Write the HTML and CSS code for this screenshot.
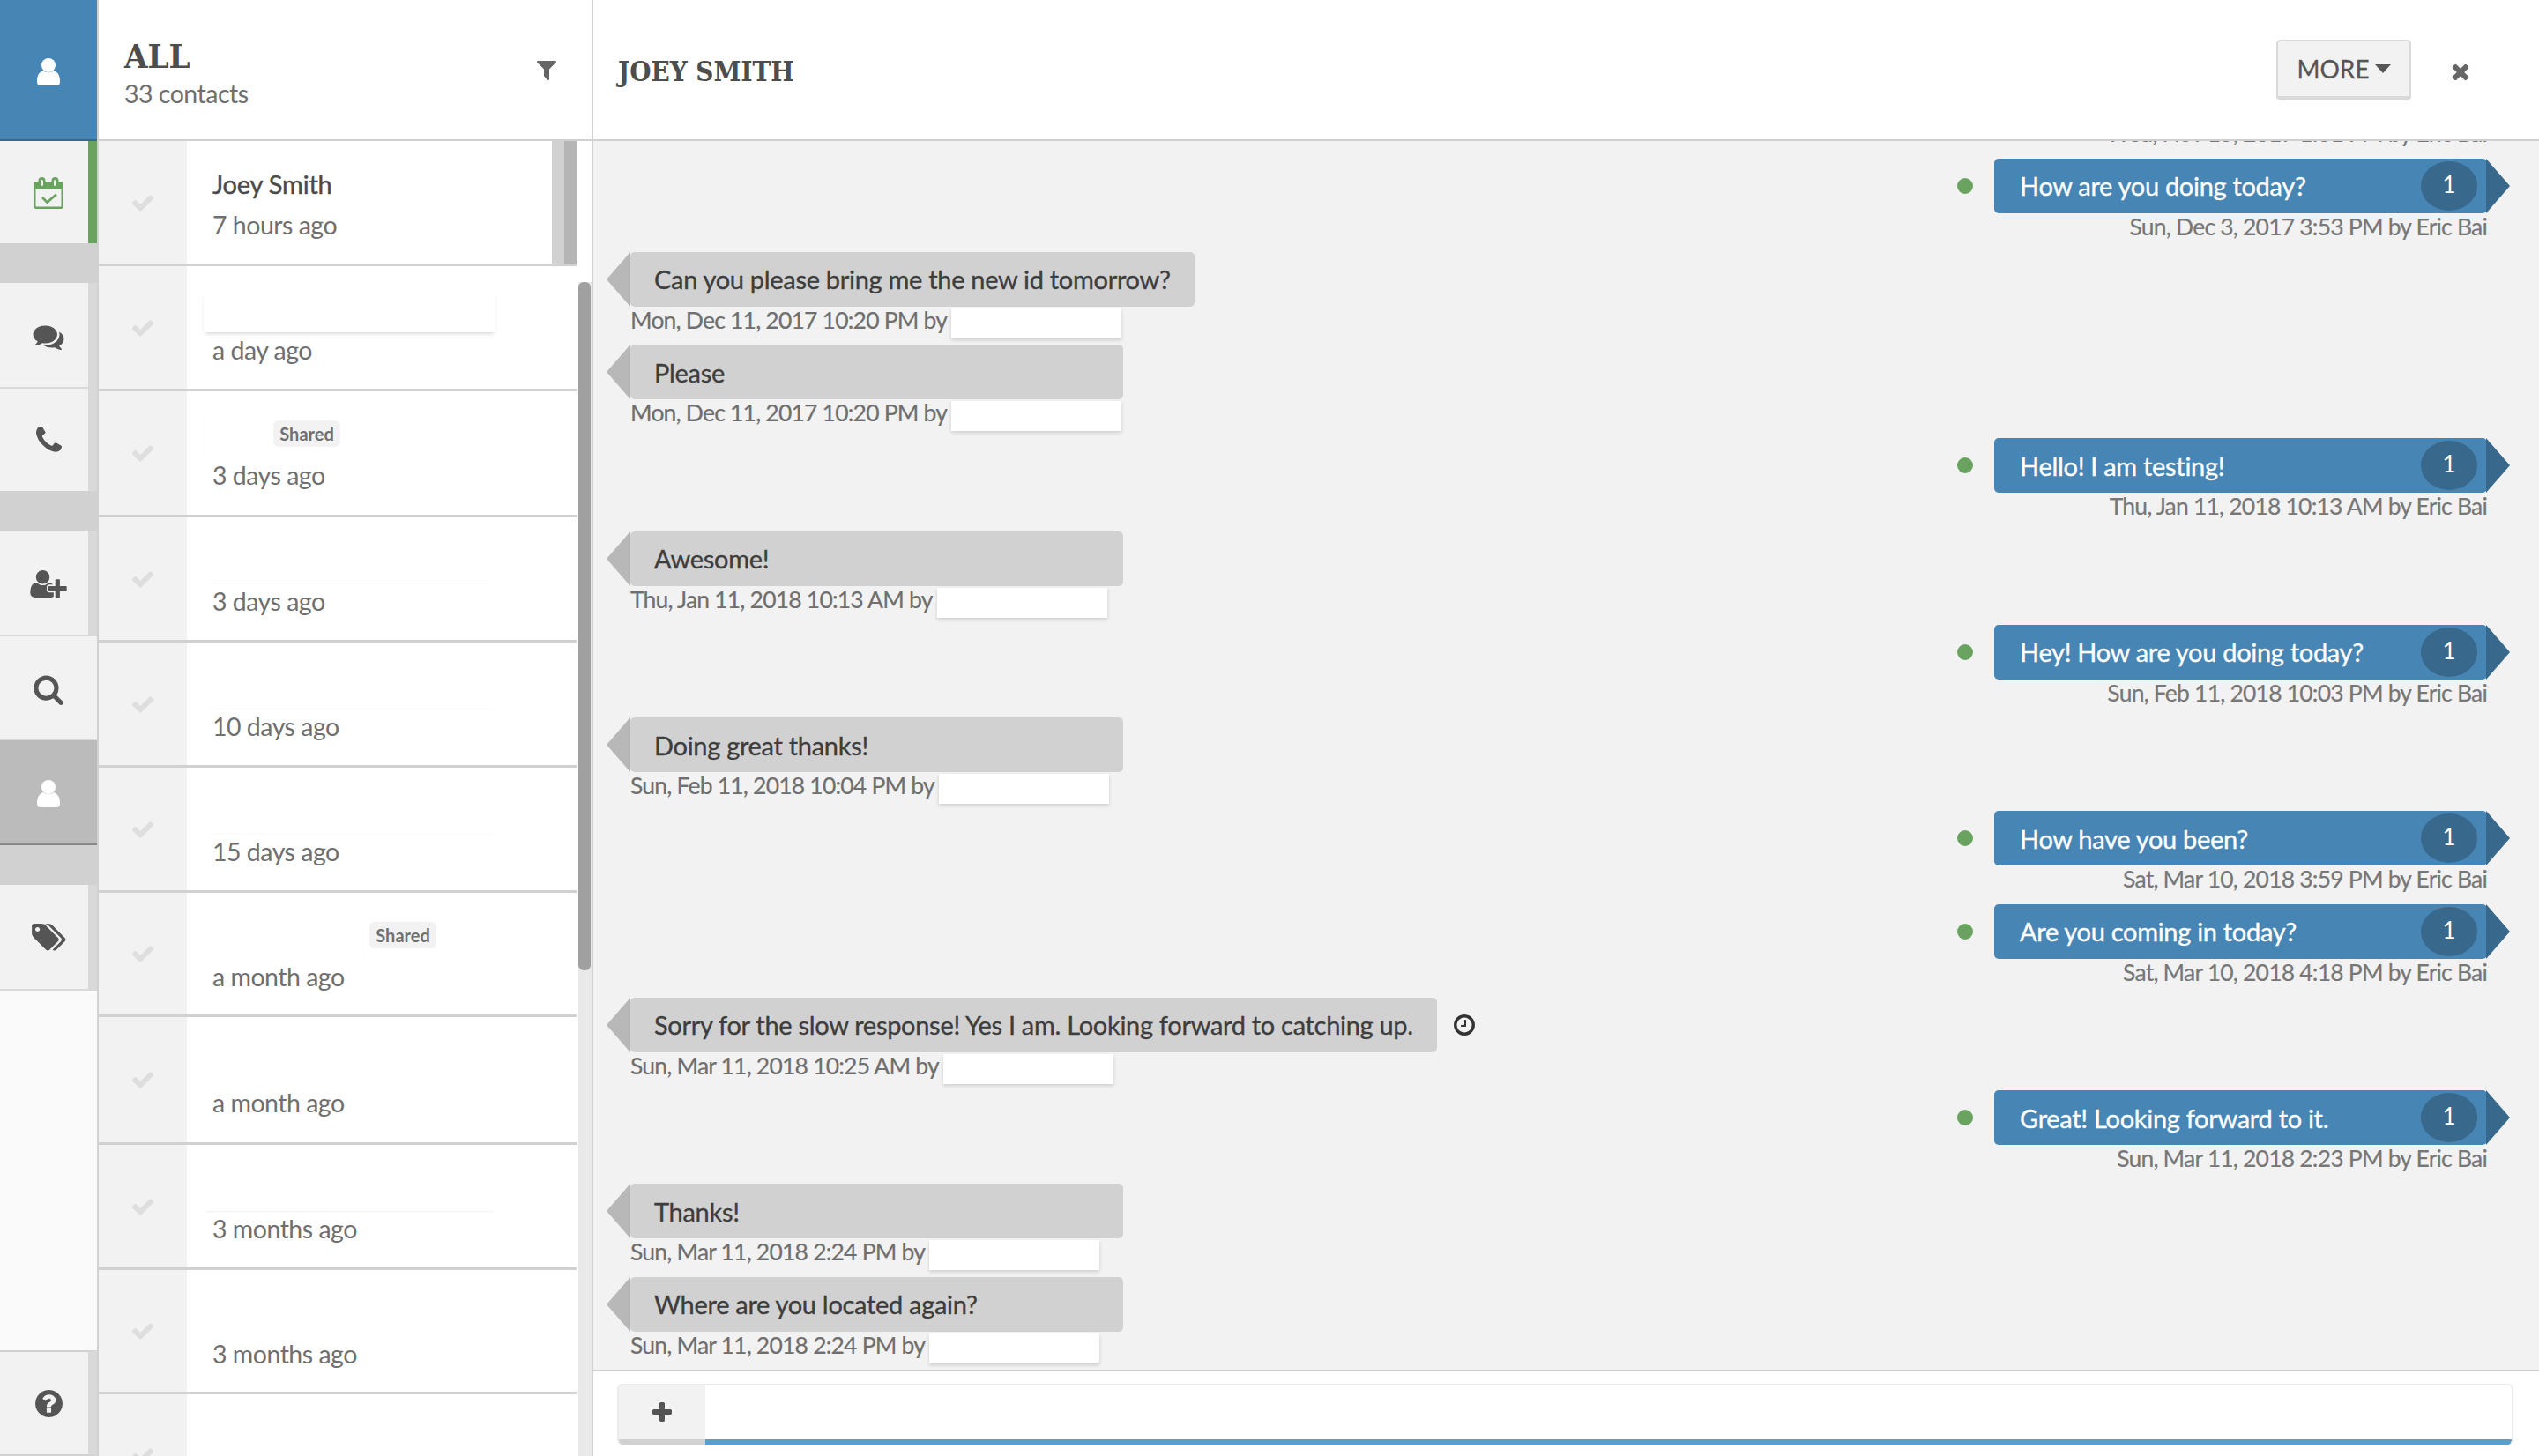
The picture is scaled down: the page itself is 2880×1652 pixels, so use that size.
FILE: index.html
```html
<!doctype html>
<html lang="en">
<head>
    <meta charset="UTF-8">
    <title>Contacts</title>
    <link rel="stylesheet" href="styles.css">
</head>
<body>
    <!-- Icon sprite -->
    <svg class="sprite" xmlns="http://www.w3.org/2000/svg">
        <symbol id="i-user" viewBox="0 0 26 31"><circle cx="13" cy="8" r="8"/><path d="M0 26c0-6 2-10 7-12 3 3 9 3 12 0 5 2 7 6 7 12v1q0 4-4 4H4q-4 0-4-4z"/></symbol>
        <symbol id="i-calendar" viewBox="0 0 34 36"><path fill-rule="evenodd" d="M3 5h28q3 0 3 3v25q0 3-3 3H3q-3 0-3-3V8q0-3 3-3zM2.500 14v19.500h29V14z"/><rect x="5.500" width="8" height="10" rx="4"/><rect x="20.500" width="8" height="10" rx="4"/><rect x="8" y="3" width="3" height="7" rx="1.500" fill="#f2f2f2"/><rect x="23" y="3" width="3" height="7" rx="1.500" fill="#f2f2f2"/><path fill="none" stroke="currentColor" stroke-width="2.800" d="M10 23l5.500 5.500L26 19.500"/></symbol>
        <symbol id="i-check" viewBox="0 0 1792 1792"><path d="M1671 566q0 40-28 68l-724 724-136 136q-28 28-68 28t-68-28l-136-136-362-362q-28-28-28-68t28-68l136-136q28-28 68-28t68 28l294 295 656-657q28-28 68-28t68 28l136 136q28 28 28 68z"/></symbol>
        <symbol id="i-times" viewBox="0 0 1792 1792"><path d="M1490 1322q0 40-28 68l-136 136q-28 28-68 28t-68-28l-294-294-294 294q-28 28-68 28t-68-28l-136-136q-28-28-28-68t28-68l294-294-294-294q-28-28-28-68t28-68l136-136q28-28 68-28t68 28l294 294 294-294q28-28 68-28t68 28l136 136q28 28 28 68t-28 68l-294 294 294 294q28 28 28 68z"/></symbol>
        <symbol id="i-plus" viewBox="0 0 1792 1792"><path d="M1600 736v192q0 40-28 68t-68 28h-416v416q0 40-28 68t-68 28h-192q-40 0-68-28t-28-68v-416h-416q-40 0-68-28t-28-68v-192q0-40 28-68t68-28h416v-416q0-40 28-68t68-28h192q40 0 68 28t28 68v416h416q40 0 68 28t28 68z"/></symbol>
        <symbol id="i-search" viewBox="0 0 1792 1792"><path d="M1216 832q0-185-131.500-316.500t-316.500-131.500-316.500 131.500-131.500 316.500 131.500 316.500 316.500 131.500 316.500-131.500 131.500-316.500zm512 832q0 52-38 90t-90 38q-54 0-90-38l-343-342q-179 124-399 124-143 0-273.500-55.500t-225-150-150-225-55.500-273.500 55.500-273.500 150-225 225-150 273.500-55.500 273.500 55.500 225 150 150 225 55.500 273.500q0 220-124 399l343 343q37 37 37 90z"/></symbol>
        <symbol id="i-phone" viewBox="0 0 1408 1408"><path transform="translate(-192 -192)" d="M1600 1240q0 27-10 70.500t-21 68.500q-21 50-122 106-94 51-186 51-27 0-53-3.500t-57.500-12.500-47-14.500-55.500-20.500-49-18q-98-35-175-83-127-79-264-216t-216-264q-48-77-83-175-3-9-18-49t-20.500-55.500-14.500-47-12.500-57.500-3.500-53q0-92 51-186 56-101 106-122 25-11 68.500-21t70.500-10q14 0 21 3 18 6 53 76 11 19 30 54t35 63.500 31 53.500q3 4 17.500 25t21.500 35.500 7 28.500q0 20-28.500 50t-62 55-62 53-28.500 46q0 9 5 22.500t8.500 20.500 14 24 11.500 19q76 137 174 235t235 174q2 1 19 11.500t24 14 20.500 8.500 22.500 5q18 0 46-28.500t53-62 55-62 50-28.500q14 0 28.500 7t35.500 21.500 25 17.500q25 15 53.500 31t63.500 35 54 30q70 35 76 53 3 7 3 21z"/></symbol>
        <symbol id="i-filter" viewBox="0 0 1408 1408"><path transform="translate(-192 -256)" d="M1595 295q17 41-14 70l-493 493v742q0 42-39 59-13 5-25 5-27 0-45-19l-256-256q-19-19-19-45v-486l-493-493q-31-29-14-70 17-39 59-39h1280q42 0 59 39z"/></symbol>
        <symbol id="i-comments" viewBox="0 0 1792 1536"><path transform="translate(0 -128)" d="M1408 768q0 139-94 257t-256.500 186.500-353.500 68.500q-86 0-176-16-124 88-278 128-36 9-86 16h-3q-11 0-20.500-8t-11.500-21q-1-3-1-6.500t.5-6.500 2-6l2.500-5 3.500-5.500 4-5 4.500-5 4-4.500q5-6 23-25t26-29.500 22.500-29 25-38.500 20.500-44q-124-72-195-177t-71-224q0-139 94-257t256.500-186.500 353.500-68.500 353.500 68.500 256.500 186.500 94 257zm384 256q0 120-71 224.500t-195 176.500q10 24 20.500 44t25 38.500 22.500 29 26 29.500 23 25q1 1 4 4.500t4.500 5 4 5 3.500 5.500l2.500 5 2 6 .5 6.500-1 6.500q-3 14-13 22t-22 7q-50-7-86-16-154-40-278-128-90 16-176 16-271 0-472-132 58 4 88 4 161 0 309-45t264-129q125-92 192-212t67-254q0-77-23-152 129 71 204 178t75 230z"/></symbol>
        <symbol id="i-user-plus" viewBox="0 0 2048 1536"><path transform="translate(0 -128)" d="M704 896q-159 0-271.500-112.500t-112.500-271.500 112.500-271.500 271.500-112.500 271.500 112.500 112.500 271.500-112.500 271.500-271.500 112.500zm960 128h352q13 0 22.500 9.500t9.500 22.500v192q0 13-9.500 22.500t-22.500 9.500h-352v352q0 13-9.500 22.500t-22.500 9.500h-192q-13 0-22.500-9.500t-9.500-22.500v-352h-352q-13 0-22.500-9.500t-9.500-22.500v-192q0-13 9.500-22.500t22.500-9.500h352v-352q0-13 9.500-22.500t22.500-9.500h192q13 0 22.500 9.500t9.500 22.500v352zm-736 224q0 52 38 90t90 38h256v238q-68 50-171 50h-874q-121 0-194-69t-73-190q0-53 3.500-103.500t14-109 26.500-108.500 43-97.500 62-81 85.500-53.500 111.500-20q19 0 39 17 79 61 154.500 91.500t164.500 30.500 164.500-30.500 154.500-91.500q20-17 39-17 132 0 217 96h-223q-52 0-90 38t-38 90v192z"/></symbol>
        <symbol id="i-tags" viewBox="0 0 1920 1536"><path transform="translate(0 -128)" d="M448 448q0-53-37.500-90.500t-90.500-37.500-90.500 37.500-37.500 90.500 37.500 90.500 90.500 37.500 90.500-37.500 37.500-90.500zm1067 576q0 53-37 90l-491 492q-39 37-91 37-53 0-90-37l-715-716q-38-37-64.500-101t-26.500-117v-416q0-52 38-90t90-38h416q53 0 117 26.500t102 64.500l715 714q37 39 37 91zm384 0q0 53-37 90l-491 492q-39 37-91 37-36 0-59-14t-53-45l470-470q37-37 37-90 0-52-37-91l-715-714q-38-38-102-64.500t-117-26.500h224q53 0 117 26.500t102 64.500l715 714q37 39 37 91z"/></symbol>
        <symbol id="i-help" viewBox="128 128 1536 1536"><path d="M1024 1376v-192q0-14-9-23t-23-9h-192q-14 0-23 9t-9 23v192q0 14 9 23t23 9h192q14 0 23-9t9-23zm256-672q0-88-55.500-163t-138.500-116-170-41q-243 0-371 213-15 24 8 42l132 100q7 6 19 6 16 0 25-12 53-68 86-92 34-24 86-24 48 0 85.500 26t37.500 59q0 38-20 61t-68 45q-63 28-115.500 86.500t-52.500 125.500v36q0 14 9 23t23 9h192q14 0 23-9t9-23q0-19 21.500-49.500t54.500-49.500q32-18 49-28.500t46-35 44.500-48 28-60.500 12.500-81zm384 192q0 209-103 385.500t-279.500 279.500-385.500 103-385.500-103-279.500-279.500-103-385.500 103-385.500 279.500-279.500 385.500-103 385.500 103 279.500 279.500 103 385.500z"/></symbol>
        <symbol id="i-clock" viewBox="128 128 1536 1536"><path d="M1024 544v448q0 14-9 23t-23 9h-320q-14 0-23-9t-9-23v-64q0-14 9-23t23-9h224v-352q0-14 9-23t23-9h64q14 0 23 9t9 23zm416 352q0-148-73-273t-198-198-273-73-273 73-198 198-73 273 73 273 198 198 273 73 273-73 198-198 73-273zm224 0q0 209-103 385.500t-279.500 279.500-385.500 103-385.500-103-279.500-279.500-103-385.500 103-385.500 279.500-279.500 385.500-103 385.500 103 279.500 279.500 103 385.500z"/></symbol>
    </svg>

    <div class="app">
        <!-- Left icon rail -->
        <aside class="rail">
            <div class="rail-item rail-top"><svg class="ico ico-user"><use href="#i-user"/></svg></div>
            <div class="rail-item rail-side rail-green"><svg class="ico ico-calendar"><use href="#i-calendar"/></svg></div>
            <div class="rail-gap"></div>
            <div class="rail-item rail-side rail-line"><svg class="ico ico-comments"><use href="#i-comments"/></svg></div>
            <div class="rail-item rail-side"><svg class="ico ico-phone"><use href="#i-phone"/></svg></div>
            <div class="rail-gap"></div>
            <div class="rail-item rail-side rail-line"><svg class="ico ico-user-plus"><use href="#i-user-plus"/></svg></div>
            <div class="rail-item rail-search"><svg class="ico ico-search"><use href="#i-search"/></svg></div>
            <div class="rail-item rail-active"><svg class="ico ico-user"><use href="#i-user"/></svg></div>
            <div class="rail-gap"></div>
            <div class="rail-item rail-side rail-line rail-tags"><svg class="ico ico-tags"><use href="#i-tags"/></svg></div>
            <div class="rail-empty"></div>
            <div class="rail-item rail-side rail-help"><svg class="ico ico-help"><use href="#i-help"/></svg></div>
        </aside>

        <!-- Contact list -->
        <section class="contacts">
            <header class="contacts-head">
                <div>
                    <div class="contacts-title">ALL</div>
                    <div class="contacts-count">33 contacts</div>
                </div>
                <svg class="ico ico-filter"><use href="#i-filter"/></svg>
            </header>
            <div class="contacts-body">
                <div class="rows">
                    <div class="row row-selected">
                        <div class="row-check"><svg class="ico ico-check"><use href="#i-check"/></svg></div>
                        <div class="row-main">
                            <div class="row-name">Joey Smith</div>
                            <div class="row-time">7 hours ago</div>
                        </div>
                        <div class="row-bars"><span class="bar-light"></span><span class="bar-dark"></span></div>
                    </div>
                    <div class="row">
                        <div class="row-check"><svg class="ico ico-check"><use href="#i-check"/></svg></div>
                        <div class="row-main">
                            <div class="row-name"><span class="mask mask-strong"></span></div>
                            <div class="row-time">a day ago</div>
                        </div>
                    </div>
                    <div class="row row-mid">
                        <div class="row-check"><svg class="ico ico-check"><use href="#i-check"/></svg></div>
                        <div class="row-main">
                            <div class="row-name"><span class="mask mask-short"></span><span class="shared">Shared</span></div>
                            <div class="row-time">3 days ago</div>
                        </div>
                    </div>
                    <div class="row">
                        <div class="row-check"><svg class="ico ico-check"><use href="#i-check"/></svg></div>
                        <div class="row-main">
                            <div class="row-name"><span class="mask mask-faint"></span></div>
                            <div class="row-time">3 days ago</div>
                        </div>
                    </div>
                    <div class="row">
                        <div class="row-check"><svg class="ico ico-check"><use href="#i-check"/></svg></div>
                        <div class="row-main">
                            <div class="row-name"><span class="mask mask-faint"></span></div>
                            <div class="row-time">10 days ago</div>
                        </div>
                    </div>
                    <div class="row">
                        <div class="row-check"><svg class="ico ico-check"><use href="#i-check"/></svg></div>
                        <div class="row-main">
                            <div class="row-name"><span class="mask mask-faint"></span></div>
                            <div class="row-time">15 days ago</div>
                        </div>
                    </div>
                    <div class="row row-short">
                        <div class="row-check"><svg class="ico ico-check"><use href="#i-check"/></svg></div>
                        <div class="row-main">
                            <div class="row-name"><span class="mask mask-mid"></span><span class="shared">Shared</span></div>
                            <div class="row-time">a month ago</div>
                        </div>
                    </div>
                    <div class="row row-tall">
                        <div class="row-check"><svg class="ico ico-check"><use href="#i-check"/></svg></div>
                        <div class="row-main">
                            <div class="row-name"></div>
                            <div class="row-time">a month ago</div>
                        </div>
                    </div>
                    <div class="row">
                        <div class="row-check"><svg class="ico ico-check"><use href="#i-check"/></svg></div>
                        <div class="row-main">
                            <div class="row-name"><span class="mask mask-soft"></span></div>
                            <div class="row-time">3 months ago</div>
                        </div>
                    </div>
                    <div class="row row-short">
                        <div class="row-check"><svg class="ico ico-check"><use href="#i-check"/></svg></div>
                        <div class="row-main">
                            <div class="row-name"></div>
                            <div class="row-time">3 months ago</div>
                        </div>
                    </div>
                    <div class="row">
                        <div class="row-check"><svg class="ico ico-check"><use href="#i-check"/></svg></div>
                        <div class="row-main"></div>
                    </div>
                </div>
                <div class="scroll-gutter">
                    <div class="scroll-track"><div class="scroll-thumb"></div></div>
                </div>
            </div>
        </section>

        <!-- Conversation -->
        <main class="chat">
            <header class="chat-head">
                <h1 class="chat-name">JOEY SMITH</h1>
                <span class="head-mask"></span>
                <button class="more-btn">MORE<span class="caret"></span></button>
                <svg class="ico ico-times"><use href="#i-times"/></svg>
            </header>

            <div class="messages">
                <div class="message-list">
                    <div class="msg msg-out">
                        <div class="msg-top"></div>
                        <div class="meta">Wed, Nov 15, 2017 1:31 PM by Eric Bai</div>
                    </div>
                    <div class="msg msg-out">
                        <div class="msg-top"><span class="dot"></span><div class="bubble">How are you doing today?<span class="badge">1</span></div></div>
                        <div class="meta">Sun, Dec 3, 2017 3:53 PM by Eric Bai</div>
                    </div>
                    <div class="msg msg-in">
                        <div class="msg-top"><div class="bubble">Can you please bring me the new id tomorrow?</div></div>
                        <div class="meta">Mon, Dec 11, 2017 10:20 PM by<span class="meta-mask"></span></div>
                    </div>
                    <div class="msg msg-in">
                        <div class="msg-top"><div class="bubble">Please</div></div>
                        <div class="meta">Mon, Dec 11, 2017 10:20 PM by<span class="meta-mask"></span></div>
                    </div>
                    <div class="msg msg-out">
                        <div class="msg-top"><span class="dot"></span><div class="bubble">Hello! I am testing!<span class="badge">1</span></div></div>
                        <div class="meta">Thu, Jan 11, 2018 10:13 AM by Eric Bai</div>
                    </div>
                    <div class="msg msg-in">
                        <div class="msg-top"><div class="bubble">Awesome!</div></div>
                        <div class="meta">Thu, Jan 11, 2018 10:13 AM by<span class="meta-mask"></span></div>
                    </div>
                    <div class="msg msg-out">
                        <div class="msg-top"><span class="dot"></span><div class="bubble">Hey! How are you doing today?<span class="badge">1</span></div></div>
                        <div class="meta">Sun, Feb 11, 2018 10:03 PM by Eric Bai</div>
                    </div>
                    <div class="msg msg-in">
                        <div class="msg-top"><div class="bubble">Doing great thanks!</div></div>
                        <div class="meta">Sun, Feb 11, 2018 10:04 PM by<span class="meta-mask"></span></div>
                    </div>
                    <div class="msg msg-out">
                        <div class="msg-top"><span class="dot"></span><div class="bubble">How have you been?<span class="badge">1</span></div></div>
                        <div class="meta">Sat, Mar 10, 2018 3:59 PM by Eric Bai</div>
                    </div>
                    <div class="msg msg-out">
                        <div class="msg-top"><span class="dot"></span><div class="bubble">Are you coming in today?<span class="badge">1</span></div></div>
                        <div class="meta">Sat, Mar 10, 2018 4:18 PM by Eric Bai</div>
                    </div>
                    <div class="msg msg-in">
                        <div class="msg-top"><div class="bubble">Sorry for the slow response! Yes I am. Looking forward to catching up.</div><svg class="ico ico-clock"><use href="#i-clock"/></svg></div>
                        <div class="meta">Sun, Mar 11, 2018 10:25 AM by<span class="meta-mask"></span></div>
                    </div>
                    <div class="msg msg-out">
                        <div class="msg-top"><span class="dot"></span><div class="bubble">Great! Looking forward to it.<span class="badge">1</span></div></div>
                        <div class="meta">Sun, Mar 11, 2018 2:23 PM by Eric Bai</div>
                    </div>
                    <div class="msg msg-in">
                        <div class="msg-top"><div class="bubble">Thanks!</div></div>
                        <div class="meta">Sun, Mar 11, 2018 2:24 PM by<span class="meta-mask"></span></div>
                    </div>
                    <div class="msg msg-in">
                        <div class="msg-top"><div class="bubble">Where are you located again?</div></div>
                        <div class="meta">Sun, Mar 11, 2018 2:24 PM by<span class="meta-mask"></span></div>
                    </div>
                </div>
            </div>

            <!-- Composer -->
            <footer class="composer">
                <div class="composer-box">
                    <div class="composer-add"><svg class="ico ico-plus"><use href="#i-plus"/></svg></div>
                    <input class="composer-input" type="text">
                </div>
            </footer>
        </main>
    </div>
</body>
</html>
```

FILE: styles.css
```css
* {
    margin: 0;
    padding: 0;
    box-sizing: border-box;
}

html, body {
    height: 100%;
    overflow: hidden;
}

body {
    font-family: 'Lato', 'Open Sans', sans-serif;
    background-color: #fff;
    color: #555;
}

.sprite {
    display: none;
}

.ico {
    display: block;
    fill: currentColor;
    flex: none;
}

.app {
    display: flex;
    height: 1652px;
}

/* Icon rail */
.rail {
    width: 112px;
    flex: none;
    display: flex;
    flex-direction: column;
    border-right: 2px solid #d1d1d1;
    color: #555;
}

.rail-item {
    height: 116px;
    flex: none;
    display: flex;
    align-items: center;
    justify-content: center;
    background: #f2f2f2;
}

.rail-top {
    height: 160px;
    padding-top: 4px;
    background: #4785b4;
    border-bottom: 2px solid #38688c;
    color: #fff;
}

.rail-side {
    border-right: 10px solid #d9d9d9;
    padding-left: 10px;
}

.rail-green {
    padding-top: 2px;
    border-right-color: #6aa360;
    color: #6aa360;
}

.rail-line {
    height: 120px;
    padding-top: 3px;
    border-bottom: 2px solid #d9d9d9;
}

.rail-tags {
    padding-top: 0;
}

.rail-search {
    height: 118px;
    padding-top: 2px;
    border-bottom: 1px solid #d9d9d9;
}

.rail-active {
    height: 119px;
    padding-top: 3px;
    background: #bbb;
    border-bottom: 2px solid #888;
    color: #fff;
}

.rail-gap {
    height: 45px;
    flex: none;
    background: #d1d1d1;
    margin-right: -2px;
}

.rail-empty {
    flex: 1;
    background: #fafafa;
}

.rail-help {
    height: 120px;
    border-top: 2px solid #d1d1d1;
    border-bottom: 2px solid #d1d1d1;
}

.ico-user { width: 26px; height: 31px; }
.ico-calendar { width: 34px; height: 36px; }
.ico-comments { width: 36px; height: 30px; }
.ico-phone { width: 29px; height: 29px; }
.ico-user-plus { width: 42px; height: 31px; }
.ico-search { width: 36px; height: 36px; }
.ico-tags { width: 39px; height: 31px; }
.ico-help { width: 31px; height: 31px; }

/* Contact list */
.contacts {
    width: 561px;
    flex: none;
    display: flex;
    flex-direction: column;
    border-right: 2px solid #d1d1d1;
}

.contacts-head {
    height: 160px;
    flex: none;
    display: flex;
    justify-content: space-between;
    align-items: flex-start;
    padding: 42px 40px 0 29px;
    border-bottom: 2px solid #d1d1d1;
}

.contacts-title {
    font-family: 'DejaVu Serif Condensed', 'DejaVu Serif', serif;
    font-stretch: condensed;
    font-weight: bold;
    font-size: 38px;
    line-height: 44px;
    color: #4d4d4d;
}

.contacts-count {
    font-size: 28.5px;
    letter-spacing: -0.5px;
    line-height: 40px;
    color: #6f6f6f;
}

.ico-filter {
    width: 22px;
    height: 22px;
    margin-top: 27px;
    color: #666;
}

.contacts-body {
    flex: 1;
    display: flex;
    min-height: 0;
    overflow: hidden;
}

.rows {
    width: 542px;
    flex: none;
}

.row {
    height: 142px;
    display: flex;
    border-bottom: 3px solid #d1d1d1;
}

.row-short { height: 141px; }
.row-mid { height: 143px; }
.row-tall { height: 145px; }

.row-check {
    width: 100px;
    flex: none;
    display: flex;
    align-items: center;
    justify-content: center;
    background: #f2f2f2;
    color: #dedede;
}

.ico-check {
    width: 28px;
    height: 28px;
}

.row-main {
    flex: 1;
    padding: 28px 0 0 29px;
}

.row-tall .row-main { padding-top: 30px; }

.row-name {
    display: flex;
    align-items: center;
    height: 40px;
    margin-bottom: 7px;
    font-size: 29px;
    letter-spacing: -0.2px;
    -webkit-text-stroke: 0.4px #4a4a4a;
    color: #4a4a4a;
}

.row-time {
    font-size: 28.5px;
    letter-spacing: -0.5px;
    line-height: 40px;
    color: #6f6f6f;
}

.row-bars {
    display: flex;
    width: 28px;
    flex: none;
}

.bar-light {
    width: 14px;
    background: #d1d1d1;
}

.bar-dark {
    width: 14px;
    background: #b5b5b5;
}

/* White blocks where the contact names were blanked out */
.mask {
    display: block;
    flex: none;
    width: 331px;
    height: 46px;
    margin: 7px 0 0 -10px;
    background: #fff;
}

.mask-strong { box-shadow: 0 3px 5px -2px rgba(0, 0, 0, 0.2); }
.mask-soft { box-shadow: 0 2px 3px -2px rgba(0, 0, 0, 0.12); }
.mask-faint { box-shadow: 0 1px 2px -1px rgba(0, 0, 0, 0.05), -1px 0 1px -1px rgba(0, 0, 0, 0.06); }
.mask-short { width: 79px; box-shadow: -1px 0 1px -1px rgba(0, 0, 0, 0.08); }
.mask-mid { width: 180px; box-shadow: 1px 1px 1px -1px rgba(0, 0, 0, 0.05); }

.shared {
    width: 76px;
    height: 30px;
    border-radius: 6px;
    background: #f2f2f2;
    color: #707070;
    font-size: 20px;
    font-weight: 700;
    letter-spacing: 0;
    -webkit-text-stroke: 0;
    line-height: 30px;
    text-align: center;
}

.mask-mid + .shared { margin-left: 8px; }

.scroll-gutter {
    width: 17px;
    flex: none;
    padding: 160px 0 0 2px;
}

.scroll-track {
    height: 100%;
    background: #e9e9e9;
}

.scroll-thumb {
    width: 14px;
    height: 781px;
    border-radius: 6px;
    background: #a0a0a0;
}

/* Conversation */
.chat {
    flex: 1;
    min-width: 0;
    display: flex;
    flex-direction: column;
    background: #f2f2f2;
}

.chat-head {
    height: 160px;
    flex: none;
    display: flex;
    align-items: center;
    padding: 0 79px 0 28px;
    background: #fff;
    border-bottom: 2px solid #d1d1d1;
    position: relative;
    z-index: 1;
}

.chat-name {
    font-family: 'DejaVu Serif Condensed', 'DejaVu Serif', serif;
    font-stretch: condensed;
    font-weight: bold;
    font-size: 31px;
    color: #4d4d4d;
    padding-top: 4px;
}

.head-mask {
    width: 336px;
    height: 42px;
    margin: 8px 0 0 21px;
    box-shadow: 1px 0 1px -1px rgba(0, 0, 0, 0.06), -1px 0 1px -1px rgba(0, 0, 0, 0.06);
}

.more-btn {
    margin-left: auto;
    display: flex;
    align-items: center;
    justify-content: center;
    width: 153px;
    height: 69px;
    background: #f2f2f2;
    border: 2px solid #d9d9d9;
    border-bottom-width: 5px;
    border-radius: 5px;
    color: #555;
    font-family: inherit;
    font-size: 28px;
    -webkit-text-stroke: 0.3px #555;
}

.caret {
    width: 0;
    height: 0;
    margin-left: 6px;
    border-left: 9px solid transparent;
    border-right: 9px solid transparent;
    border-top: 10px solid #555;
}

.ico-times {
    width: 28px;
    height: 28px;
    margin: 4px -4px 0 42px;
    color: #666;
}

.messages {
    flex: 1;
    min-height: 0;
    overflow: hidden;
}

.message-list {
    margin-top: -86px;
}

.msg {
    height: 105.75px;
    display: flex;
    flex-direction: column;
}

.msg-top {
    display: flex;
    align-items: center;
    height: 62px;
    flex: none;
}

.msg-in {
    align-items: flex-start;
    padding-left: 42px;
}

.msg-out {
    align-items: flex-end;
    padding-right: 59px;
}

.bubble {
    position: relative;
    display: flex;
    align-items: center;
    justify-content: space-between;
    min-width: 559px;
    height: 62px;
    padding-left: 27px;
    padding-right: 27px;
    border-radius: 5px;
    font-size: 29px;
    letter-spacing: -0.3px;
    -webkit-text-stroke: 0.35px currentColor;
}

.msg-in .bubble {
    background: #d1d1d1;
    color: #3d3d3d;
}

.msg-in .bubble::before {
    content: "";
    position: absolute;
    left: -27px;
    top: 0;
    border-right: 27px solid #b8b8b8;
    border-top: 31px solid transparent;
    border-bottom: 31px solid transparent;
}

.msg-out .bubble {
    background: #4785b4;
    color: #fff;
    padding-left: 29px;
    padding-right: 11px;
}

.msg-out .bubble::after {
    content: "";
    position: absolute;
    right: -26px;
    top: 0;
    border-left: 27px solid #38688c;
    border-top: 31px solid transparent;
    border-bottom: 31px solid transparent;
}

.badge {
    width: 64px;
    height: 56px;
    border-radius: 50%;
    background: #38688c;
    font-size: 26px;
    -webkit-text-stroke: 0;
    line-height: 52px;
    text-align: center;
}

.dot {
    width: 18px;
    height: 18px;
    margin-right: 24px;
    border-radius: 50%;
    background: #6aa360;
}

.meta {
    display: flex;
    align-items: flex-start;
    height: 30px;
    font-size: 26.5px;
    letter-spacing: -0.8px;
    line-height: 30px;
    color: #6f6f6f;
    -webkit-text-stroke: 0.2px currentColor;
}

.msg-out .meta {
    color: #777;
}

.meta-mask {
    flex: none;
    width: 193px;
    height: 34px;
    margin: 2px 0 0 5px;
    background: #fff;
    box-shadow: 0 2px 4px rgba(0, 0, 0, 0.15);
}

.ico-clock {
    width: 24px;
    height: 24px;
    margin-left: 19px;
    color: #333;
}

/* Composer */
.composer {
    height: 98px;
    flex: none;
    padding: 14px 29px 0 27px;
    background: #fff;
    border-top: 2px solid #d1d1d1;
}

.composer-box {
    display: flex;
    height: 69px;
    border: 2px solid #ebebeb;
    border-bottom: none;
    border-radius: 6px;
    overflow: hidden;
}

.composer-add {
    width: 98px;
    flex: none;
    display: flex;
    align-items: center;
    justify-content: center;
    background: #f2f2f2;
    border-bottom: 6px solid #d1d1d1;
    color: #555;
}

.ico-plus {
    width: 28px;
    height: 28px;
}

.composer-input {
    flex: 1;
    min-width: 0;
    border: none;
    outline: none;
    border-bottom: 6px solid #5a9fcb;
    background: #fff;
}
```
